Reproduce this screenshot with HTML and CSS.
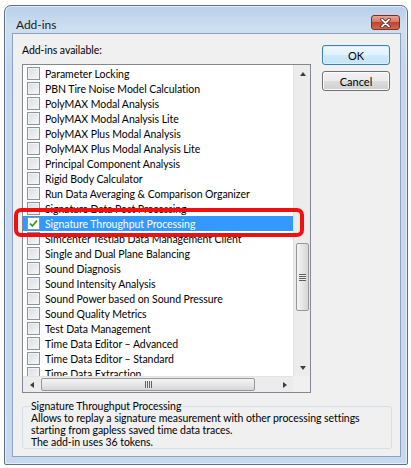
FILE: index.html
```html
<!DOCTYPE html>
<html lang="en">
<head>
  <meta charset="UTF-8">
  <title>Add-ins</title>
  <link rel="stylesheet" href="styles.css">
</head>
<body>
  <div class="window">
    <div class="titlebar">
      <span class="title">Add-ins</span>
      <div class="close">
        <svg width="11" height="10" viewBox="0 0 11 10">
          <path d="M2 1.5 L9 8.5 M9 1.5 L2 8.5" stroke="#5b1b12" stroke-width="3.4" stroke-linecap="round"/>
          <path d="M2 1.5 L9 8.5 M9 1.5 L2 8.5" stroke="#fff" stroke-width="1.8" stroke-linecap="round"/>
        </svg>
      </div>
    </div>

    <div class="client">
      <div class="main">
        <div class="left">
          <div class="label">Add-ins available:</div>
          <div class="listbox">
            <div class="rows">
              <div class="row"><span class="check"></span>Parameter Locking</div>
              <div class="row"><span class="check"></span>PBN Tire Noise Model Calculation</div>
              <div class="row"><span class="check"></span>PolyMAX Modal Analysis</div>
              <div class="row"><span class="check"></span>PolyMAX Modal Analysis Lite</div>
              <div class="row"><span class="check"></span>PolyMAX Plus Modal Analysis</div>
              <div class="row"><span class="check"></span>PolyMAX Plus Modal Analysis Lite</div>
              <div class="row"><span class="check"></span>Principal Component Analysis</div>
              <div class="row"><span class="check"></span>Rigid Body Calculator</div>
              <div class="row"><span class="check"></span>Run Data Averaging &amp; Comparison Organizer</div>
              <div class="row"><span class="check"></span>Signature Data Post Processing</div>
              <div class="row selected">
                <span class="check">
                  <svg width="11" height="11" viewBox="0 0 11 11">
                    <path d="M2 5.5 L4.4 8 L9 2.5" fill="none" stroke="#2f9a1e" stroke-width="1.8"/>
                  </svg>
                </span>Signature Throughput Processing
              </div>
              <div class="row"><span class="check"></span>Simcenter Testlab Data Management Client</div>
              <div class="row"><span class="check"></span>Single and Dual Plane Balancing</div>
              <div class="row"><span class="check"></span>Sound Diagnosis</div>
              <div class="row"><span class="check"></span>Sound Intensity Analysis</div>
              <div class="row"><span class="check"></span>Sound Power based on Sound Pressure</div>
              <div class="row"><span class="check"></span>Sound Quality Metrics</div>
              <div class="row"><span class="check"></span>Test Data Management</div>
              <div class="row"><span class="check"></span>Time Data Editor &ndash; Advanced</div>
              <div class="row"><span class="check"></span>Time Data Editor &ndash; Standard</div>
              <div class="row"><span class="check"></span>Time Data Extraction</div>
            </div>
            <div class="vscroll">
              <div class="arrow"><span class="tri-up"></span></div>
              <div class="track">
                <div class="vthumb"><span class="grip-h"></span></div>
              </div>
              <div class="arrow"><span class="tri-down"></span></div>
            </div>
            <div class="hscroll">
              <div class="arrow"><span class="tri-left"></span></div>
              <div class="track">
                <div class="hthumb"><span class="grip-v"></span></div>
              </div>
              <div class="arrow"><span class="tri-right"></span></div>
            </div>
            <div class="corner"></div>
            <div class="marker"></div>
          </div>
        </div>

        <div class="buttons">
          <button class="btn default">OK</button>
          <button class="btn">Cancel</button>
        </div>
      </div>

      <fieldset class="info">
        <legend>Signature Throughput Processing</legend>
        Allows to replay a signature measurement with other processing settings<br>
        starting from gapless saved time data traces.<br>
        The add-in uses 36 tokens.
      </fieldset>
    </div>
  </div>
</body>
</html>
```

FILE: styles.css
```css
body {
  margin: 0;
  background: #fff;
  font-family: Lato, "Liberation Sans", Arial, sans-serif;
  font-size: 10.5px;
  letter-spacing: -0.05px;
  color: #000;
}
.window {
  margin: 5px 0 0 4px;
  width: 404px;
  height: 460px;
  box-sizing: border-box;
  border: 1px solid #5d6d84;
  border-radius: 7px 7px 2px 2px;
  padding: 0 6px 7px 7px;
  display: flex;
  flex-direction: column;
  background: linear-gradient(#b8cfe9, #cddff2 22px, #c3d7ee 60px, #c6d9ef);
  box-shadow: inset 0 0 0 1px #e4eef9;
}
.titlebar {
  height: 27px;
  display: flex;
  align-items: flex-start;
  padding-left: 4px;
}
.title {
  margin-top: 11px;
  font-size: 12px;
  color: #1a1a1a;
}
.close {
  margin: 9px 1px 0 auto;
  width: 29px;
  height: 15px;
  box-sizing: border-box;
  border: 1px solid #7e2c22;
  border-radius: 3px;
  background: linear-gradient(#e6a395, #d47866 45%, #c0432e 50%, #cf6a4e);
  display: flex;
  align-items: center;
  justify-content: center;
}
.client {
  flex: 1;
  background: #f0f0f0;
  border: 1px solid #8ea2bd;
  padding: 9px 10px 0 9px;
}
.main {
  display: flex;
  gap: 11px;
}
.left {
  width: 289px;
}
.label {
  height: 15px;
  line-height: 15px;
  margin-bottom: 6px;
}
.listbox {
  position: relative;
  height: 329px;
  box-sizing: border-box;
  border: 1px solid #828790;
  background: #fff;
  display: grid;
  grid-template-columns: 270px 17px;
  grid-template-rows: 311px 16px;
}
.rows {
  overflow: hidden;
  padding-top: 1px;
}
.row {
  height: 15px;
  display: flex;
  align-items: center;
  white-space: nowrap;
}
.row.selected {
  background: #3399ff;
  color: #fff;
}
.check {
  width: 13px;
  height: 13px;
  box-sizing: border-box;
  margin: 0 5px 0 4px;
  border: 1px solid #8c949c;
  background: linear-gradient(135deg, #d9dde2, #f6f7f8);
  box-shadow: inset 0 0 0 1px #f2f3f4;
  flex: none;
  display: flex;
  align-items: center;
  justify-content: center;
}
.row.selected .check {
  background: #fff;
  box-shadow: none;
}
.vscroll {
  display: flex;
  flex-direction: column;
  background: #ececec;
  border-left: 1px solid #e2e2e2;
}
.hscroll {
  display: flex;
  background: #ececec;
  border-top: 1px solid #e2e2e2;
}
.corner {
  background: #f0f0f0;
}
.arrow {
  width: 17px;
  height: 17px;
  flex: none;
  display: flex;
  align-items: center;
  justify-content: center;
}
.hscroll .arrow {
  height: 15px;
}
.track {
  flex: 1;
}
.tri-up, .tri-down, .tri-left, .tri-right {
  width: 0;
  height: 0;
  border: 3px solid transparent;
}
.tri-up { border-bottom: 4px solid #3d3d3d; border-top: 0; }
.tri-down { border-top: 4px solid #3d3d3d; border-bottom: 0; }
.tri-left { border-right: 4px solid #3d3d3d; border-left: 0; }
.tri-right { border-left: 4px solid #3d3d3d; border-right: 0; }
.vthumb {
  margin: 161px 0 0 2px;
  width: 13px;
  height: 68px;
  box-sizing: border-box;
  border: 1px solid #979797;
  border-radius: 2px;
  background: linear-gradient(90deg, #f4f4f4, #e6e6e6 50%, #d6d6d6);
  display: flex;
  align-items: center;
  justify-content: center;
}
.hthumb {
  margin: 1px 0 0 1px;
  width: 214px;
  height: 13px;
  box-sizing: border-box;
  border: 1px solid #979797;
  border-radius: 2px;
  background: linear-gradient(#f4f4f4, #e6e6e6 50%, #d6d6d6);
  display: flex;
  align-items: center;
  justify-content: center;
}
.grip-h {
  width: 7px;
  height: 7px;
  background: repeating-linear-gradient(#5f5f5f 0 1px, #eeeeee 1px 2px);
}
.grip-v {
  width: 7px;
  height: 7px;
  background: repeating-linear-gradient(90deg, #5f5f5f 0 1px, #eeeeee 1px 2px);
}
.marker {
  position: absolute;
  left: -9px;
  top: 143px;
  width: 290px;
  height: 29px;
  box-sizing: border-box;
  border: 4px solid #f01010;
  border-radius: 7px;
}
.buttons {
  padding-top: 2px;
  display: flex;
  flex-direction: column;
  gap: 6px;
}
.btn {
  width: 68px;
  height: 20px;
  padding: 0;
  font-family: inherit;
  font-size: 11px;
  color: #000;
  border: 1px solid #707070;
  border-radius: 3px;
  background: linear-gradient(#f2f2f2, #ebebeb 50%, #dddddd 50%, #cfcfcf);
  box-shadow: inset 0 0 0 1px #fcfcfc;
}
.btn.default {
  border-color: #3c7fb1;
  background: linear-gradient(#eef8fe, #e0f2fc 50%, #cfeafb 50%, #c2e4f8);
  box-shadow: inset 0 0 0 1px #d7f0fd;
}
.info {
  margin: 7px 0 0 0;
  width: 370px;
  box-sizing: border-box;
  border: 1px solid #d5dfe5;
  border-radius: 3px;
  padding: 0 8px 0 8px;
  line-height: 12px;
  white-space: nowrap;
}
.info legend {
  padding: 0;
  line-height: 12px;
}
```
